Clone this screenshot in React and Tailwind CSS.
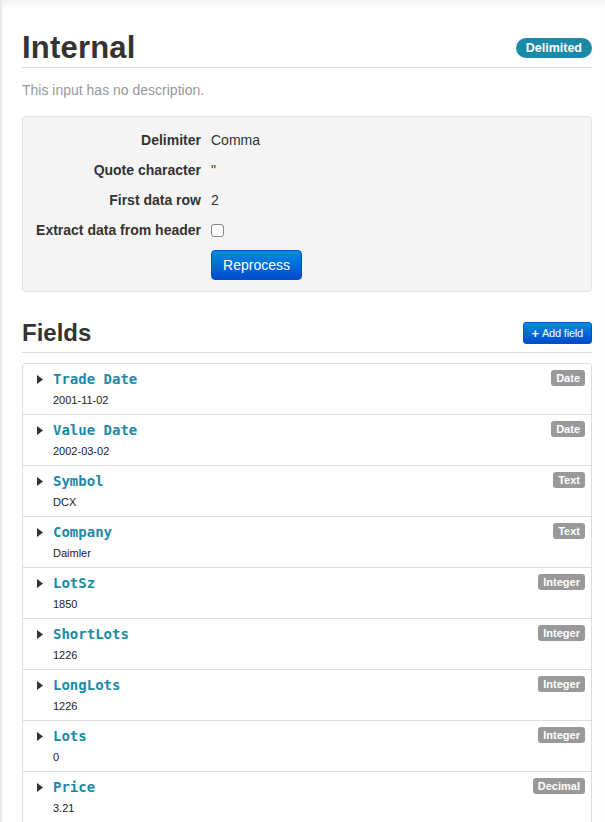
import React from 'react';

const fields = [
  { name: 'Trade Date', sample: '2001-11-02', type: 'Date' },
  { name: 'Value Date', sample: '2002-03-02', type: 'Date' },
  { name: 'Symbol', sample: 'DCX', type: 'Text' },
  { name: 'Company', sample: 'Daimler', type: 'Text' },
  { name: 'LotSz', sample: '1850', type: 'Integer' },
  { name: 'ShortLots', sample: '1226', type: 'Integer' },
  { name: 'LongLots', sample: '1226', type: 'Integer' },
  { name: 'Lots', sample: '0', type: 'Integer' },
  { name: 'Price', sample: '3.21', type: 'Decimal' },
];

const settings = [
  { label: 'Delimiter', value: 'Comma' },
  { label: 'Quote character', value: '"' },
  { label: 'First data row', value: '2' },
];

function Caret() {
  return (
    <svg width="6" height="9" viewBox="0 0 6 9" className="shrink-0">
      <path d="M0 0 L6 4.5 L0 9 Z" fill="#333" />
    </svg>
  );
}

export default function App() {
  return (
    <div
      className="min-h-screen bg-white border-l-2 border-[#ebebeb] text-[#333] shadow-[inset_0_8px_8px_-6px_rgba(0,0,0,0.08)]"
      style={{ fontFamily: '"Liberation Sans", Arial, sans-serif' }}
    >
      <div className="pl-5 pr-[13px] pt-[29px] pb-6">
        {/* Title */}
        <div className="flex items-center justify-between border-b border-[#ddd] h-[39px]">
          <h1 className="text-[31px] leading-[38px] font-bold tracking-[0.2px]">Internal</h1>
          <span className="bg-[#1b8aa9] text-white text-[12.5px] font-bold leading-[20px] h-[20px] px-[10px] rounded-full">
            Delimited
          </span>
        </div>
        <p className="mt-3 text-[14px] leading-5 text-[#999]">This input has no description.</p>

        {/* Settings well */}
        <div className="mt-4 bg-[#f5f5f5] border border-[#e3e3e3] rounded-[4px] pl-[11px] pt-[8px] pb-[11px]">
          <div className="grid grid-cols-[167px_1fr] gap-x-[10px] text-[14px]">
            {settings.map((s) => (
              <React.Fragment key={s.label}>
                <div className="h-[30px] leading-[30px] text-right font-bold whitespace-nowrap">{s.label}</div>
                <div className="h-[30px] leading-[30px]">{s.value}</div>
              </React.Fragment>
            ))}
            <div className="h-[30px] leading-[30px] text-right font-bold whitespace-nowrap">Extract data from header</div>
            <div className="h-[30px] flex items-center">
              <span className="w-[13px] h-[13px] border border-[#888] rounded-[3px] bg-white" />
            </div>
            <div />
            <div className="mt-[5px]">
              <button className="w-[91px] h-[30px] rounded-[4px] border border-[#0050c8] bg-gradient-to-b from-[#0a8ce0] to-[#0249cc] text-white text-[14px]">
                Reprocess
              </button>
            </div>
          </div>
        </div>

        {/* Fields */}
        <div className="mt-[22px] flex items-center justify-between border-b border-[#ddd] h-[39px]">
          <h2 className="text-[24px] leading-[38px] font-bold">Fields</h2>
          <button className="h-[22px] px-[8px] rounded-[3px] border border-[#0050c8] bg-gradient-to-b from-[#0a8ce0] to-[#0249cc] text-white text-[11px] flex items-center gap-[3px] tracking-[-0.2px]">
            <span className="font-bold text-[13px] leading-none">+</span>
            Add field
          </button>
        </div>

        <div className="mt-[10px] border border-[#ddd] rounded-t-[3px]">
          {fields.map((f, i) => (
            <div
              key={f.name}
              className={`relative pl-[14px] pt-[5px] ${i > 0 ? 'h-[51px] border-t border-[#ddd]' : 'h-[50px]'}`}
            >
              <div className="flex items-center gap-[10px] h-[20px]">
                <Caret />
                <span
                  className="text-[14px] font-bold text-[#1b89a8] leading-5"
                  style={{ fontFamily: '"DejaVu Sans Mono", monospace' }}
                >
                  {f.name}
                </span>
              </div>
              <div className="pl-4 mt-[3px] text-[11px] leading-4 text-[#222]">{f.sample}</div>
              <span className="absolute top-[6px] right-[6px] bg-[#999] text-white text-[11px] font-bold leading-4 h-4 px-[5px] rounded-[3px]">
                {f.type}
              </span>
            </div>
          ))}
        </div>
      </div>
    </div>
  );
}
